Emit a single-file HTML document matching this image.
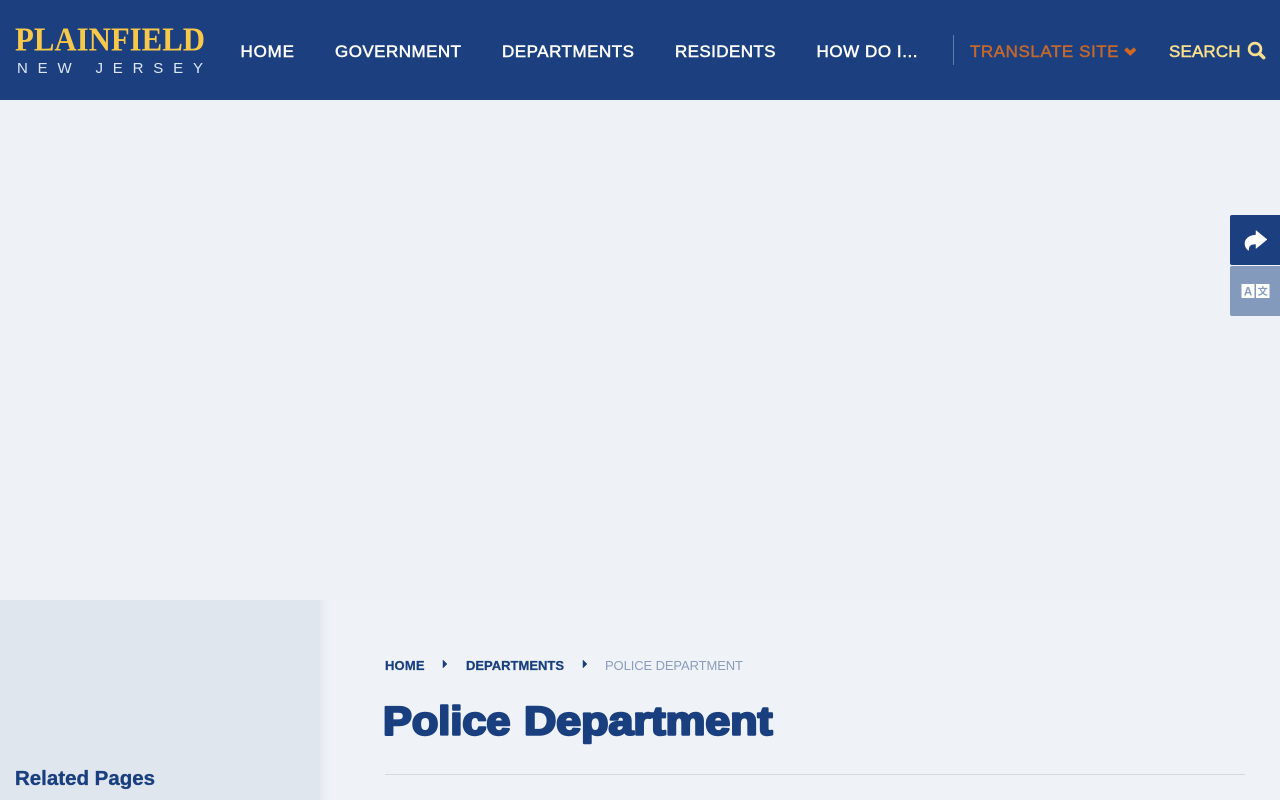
<!DOCTYPE html>
<html lang="en">
<head>
<meta charset="utf-8">
<title>Police Department - Plainfield, New Jersey</title>
<style>
html,body{margin:0;padding:0;width:1280px;height:800px;overflow:hidden;background:#eef2f7}
svg{display:block;position:absolute;left:0;top:0}
text{font-family:"Liberation Sans",sans-serif}
.nav{font-size:17px;font-weight:400;fill:#fff;stroke:#fff;stroke-width:.5px}
.crumb{font-size:13px;font-weight:700;fill:#1a3f7f;stroke:#1a3f7f;stroke-width:.25px}
</style>
</head>
<body>
<svg width="1280" height="800" viewBox="0 0 1280 800" xmlns="http://www.w3.org/2000/svg">
<defs>
<linearGradient id="sh" x1="0" x2="1" y1="0" y2="0">
<stop offset="0" stop-color="#dfe6ee" stop-opacity=".8"/>
<stop offset="1" stop-color="#eef2f7" stop-opacity="0"/>
</linearGradient>
</defs>
<rect width="1280" height="800" fill="#eef2f7"/>
<rect y="600" x="320" width="960" height="200" fill="#eff3f8"/>
<rect width="1280" height="100" fill="#1b3f7f"/>

<text x="15" y="50.500" font-size="34" font-weight="700" fill="#f7c84a" style="font-family:'Liberation Serif',serif" textLength="190" lengthAdjust="spacingAndGlyphs">PLAINFIELD</text>
<text x="17" y="73" font-size="15" fill="#dbe7f7" textLength="186" lengthAdjust="spacing">NEW JERSEY</text>

<text class="nav" x="240.500" y="57" textLength="53.500" lengthAdjust="spacing">HOME</text>
<text class="nav" x="335" y="57" textLength="126" lengthAdjust="spacing">GOVERNMENT</text>
<text class="nav" x="502" y="57" textLength="132" lengthAdjust="spacing">DEPARTMENTS</text>
<text class="nav" x="675" y="57" textLength="100.500" lengthAdjust="spacing">RESIDENTS</text>
<text class="nav" x="816.500" y="57" textLength="101" lengthAdjust="spacing">HOW DO I...</text>

<rect x="953" y="35" width="1" height="30" fill="#5b7cac"/>
<text class="nav" x="970" y="57" style="fill:#c1692e;stroke:#c1692e" textLength="148.500" lengthAdjust="spacing">TRANSLATE SITE</text>
<path d="M1125.500 48.800L1130.300 53.300L1135.100 48.800" fill="none" stroke="#d2691e" stroke-width="3.800"/>
<text class="nav" x="1169" y="57" style="fill:#f9e08e;stroke:#f9e08e" textLength="71.500" lengthAdjust="spacing">SEARCH</text>
<circle cx="1255" cy="49" r="5.900" fill="none" stroke="#f9e08e" stroke-width="2.700"/>
<path d="M1259.500 53.500L1263.700 57.700" stroke="#f9e08e" stroke-width="3.500" stroke-linecap="round"/>

<rect x="1230" y="215" width="52" height="50" rx="2" fill="#1b3f7f"/>
<path d="M1256 230.500L1267 239.500L1256 248.500V244C1251 244 1248.500 245.500 1248.500 250.500C1243.500 247 1242 236 1256 235Z" fill="#fff" stroke="#fff" stroke-width=".5" stroke-linejoin="round"/>
<rect x="1230" y="266" width="52" height="50" rx="2" fill="#839abd"/>
<rect x="1241.500" y="284" width="13" height="14" fill="#fff"/>
<rect x="1256" y="284" width="13.500" height="14" fill="#fff"/>
<text x="1248" y="295.500" font-size="11.500" font-weight="700" fill="#839abd" text-anchor="middle">A</text>
<text x="1262.700" y="295" font-size="10" font-weight="700" fill="#839abd" text-anchor="middle" style="font-family:'Noto Sans CJK SC',sans-serif">文</text>

<rect x="320" y="600" width="12" height="200" fill="url(#sh)"/>
<rect x="0" y="600" width="320" height="200" fill="#dfe6ee"/>
<text x="15" y="785" font-size="20" font-weight="700" fill="#1a3f7f" stroke="#1a3f7f" stroke-width=".35" textLength="140" lengthAdjust="spacingAndGlyphs">Related Pages</text>

<text class="crumb" x="385" y="670" textLength="39.500" lengthAdjust="spacing">HOME</text>
<path d="M443 660L447 664L443 668Z" fill="#1a3f7f" stroke="#1a3f7f" stroke-width=".5"/>
<text class="crumb" x="466" y="670" textLength="98" lengthAdjust="spacing">DEPARTMENTS</text>
<path d="M583 660L587 664L583 668Z" fill="#1a3f7f" stroke="#1a3f7f" stroke-width=".5"/>
<text x="605" y="670" font-size="13" fill="#8a9dbb" textLength="138" lengthAdjust="spacing">POLICE DEPARTMENT</text>

<text x="383" y="734.500" font-size="40" font-weight="700" fill="#1a3f7f" stroke="#1a3f7f" stroke-width="2.400" stroke-linejoin="round" textLength="127.500" lengthAdjust="spacingAndGlyphs">Police</text>
<text x="524" y="734.500" font-size="40" font-weight="700" fill="#1a3f7f" stroke="#1a3f7f" stroke-width="2.400" stroke-linejoin="round" textLength="248.500" lengthAdjust="spacingAndGlyphs">Department</text>

<rect x="385" y="774" width="860" height="1" fill="#d5d9df"/>
</svg>
</body>
</html>
